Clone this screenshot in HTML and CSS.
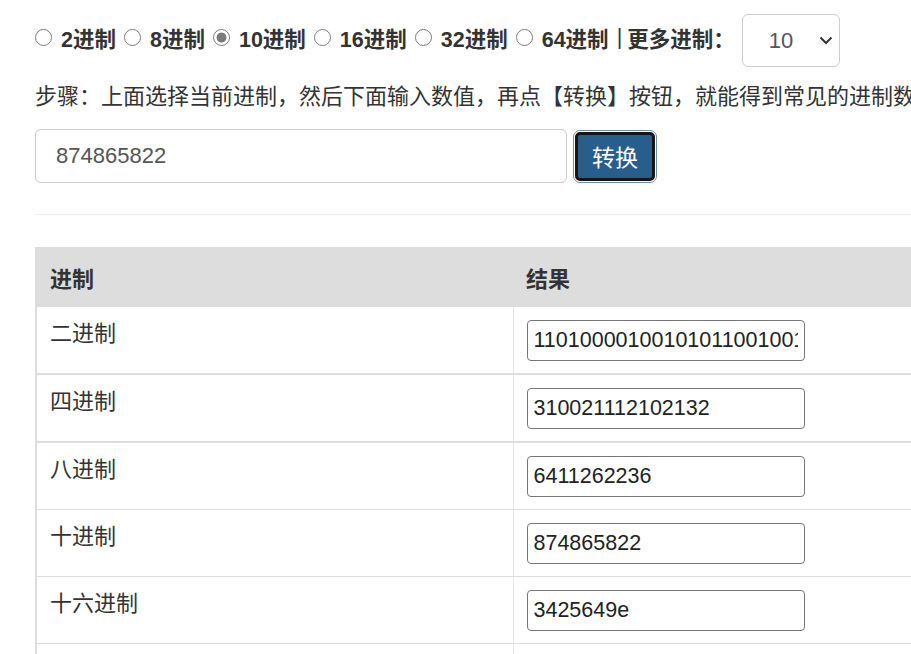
FILE: index.html
```html
<!DOCTYPE html>
<html lang="zh-CN">

<head>
  <meta charset="UTF-8">
  <meta name="viewport" content="width=device-width, initial-scale=1.0">
  <title>进制转换</title>
  <link rel="stylesheet" href="styles.css">
</head>

<body>
  <div class="container">
    <div class="bases">
      <label class="base"><input type="radio" name="base" value="2"><span>2进制</span></label>
      <label class="base"><input type="radio" name="base" value="8"><span>8进制</span></label>
      <label class="base"><input type="radio" name="base" value="10" checked><span>10进制</span></label>
      <label class="base"><input type="radio" name="base" value="16"><span>16进制</span></label>
      <label class="base"><input type="radio" name="base" value="32"><span>32进制</span></label>
      <label class="base"><input type="radio" name="base" value="64"><span>64进制</span></label>
      <span class="sep">|</span>
      <span class="more">更多进制：</span>
      <div class="select-wrap">
        <select id="moreBase">
          <option>2</option>
          <option>8</option>
          <option selected>10</option>
          <option>16</option>
          <option>32</option>
          <option>36</option>
        </select>
        <svg class="chevron" width="14" height="9" viewBox="0 0 14 9">
          <path d="M1.5 1.5 L7 7 L12.5 1.5" fill="none" stroke="#333" stroke-width="2" />
        </svg>
      </div>
    </div>

    <p class="steps">步骤：上面选择当前进制，然后下面输入数值，再点【转换】按钮，就能得到常见的进制数值。</p>

    <div class="convert">
      <input type="text" class="number-input" id="number" value="874865822">
      <button type="button" class="convert-btn">转换</button>
    </div>

    <hr class="divider">

    <table class="result-table">
      <thead>
        <tr>
          <th class="col-name">进制</th>
          <th>结果</th>
        </tr>
      </thead>
      <tbody>
        <tr class="thick">
          <td>二进制</td>
          <td><input type="text" class="result" value="110100001001010110010010011110"></td>
        </tr>
        <tr class="thick">
          <td>四进制</td>
          <td><input type="text" class="result" value="310021112102132"></td>
        </tr>
        <tr>
          <td>八进制</td>
          <td><input type="text" class="result" value="6411262236"></td>
        </tr>
        <tr>
          <td>十进制</td>
          <td><input type="text" class="result" value="874865822"></td>
        </tr>
        <tr>
          <td>十六进制</td>
          <td><input type="text" class="result" value="3425649e"></td>
        </tr>
        <tr>
          <td>三十二进制</td>
          <td><input type="text" class="result" value="q2ap4u"></td>
        </tr>
      </tbody>
    </table>
  </div>
</body>

</html>
```

FILE: styles.css
```css
* {
  margin: 0;
  padding: 0;
  box-sizing: border-box;
}

body {
  font-family: 'Liberation Sans', 'Noto Sans CJK SC', sans-serif;
  font-size: 22px;
  color: #333333;
  background: #ffffff;
  overflow: hidden;
}

.container {
  width: 1140px;
  padding: 14px 0 0 35px;
}

/* base choice row */
.bases {
  display: flex;
  align-items: center;
  font-size: 21.5px;
  font-weight: bold;
  height: 53px;
}

.base,
.sep,
.more {
  margin-bottom: 7px;
}

.base {
  display: flex;
  align-items: center;
  margin-right: 8px;
  cursor: pointer;
}

.base input {
  appearance: none;
  width: 17px;
  height: 17px;
  margin-right: 9px;
  border: 1px solid #7a7a7a;
  border-radius: 50%;
  background: #ffffff;
}

.base input:checked {
  background: radial-gradient(circle, #7a7a7a 0 4.6px, #ffffff 5.3px);
}

.sep {
  font-weight: normal;
  margin-right: 5px;
}

.select-wrap {
  position: relative;
  margin-left: 7px;
}

.select-wrap select {
  appearance: none;
  width: 98px;
  height: 53px;
  padding-left: 26px;
  font-family: 'Liberation Sans', sans-serif;
  font-size: 22px;
  color: #555555;
  background: #ffffff;
  border: 1px solid #cccccc;
  border-radius: 6px;
}

.chevron {
  position: absolute;
  right: 7px;
  top: 22px;
  pointer-events: none;
}

.steps {
  margin-top: 15px;
  line-height: 30px;
  white-space: nowrap;
}

/* input + button */
.convert {
  display: flex;
  align-items: center;
  margin-top: 17px;
}

.number-input {
  width: 532px;
  height: 54px;
  padding: 0 20px;
  font-family: 'Liberation Sans', sans-serif;
  font-size: 22px;
  color: #555555;
  border: 1px solid #cccccc;
  border-radius: 6px;
  outline: none;
}

.convert-btn {
  width: 80px;
  height: 49px;
  margin-left: 8px;
  font-family: 'Liberation Sans', 'Noto Sans CJK SC', sans-serif;
  font-size: 23px;
  color: #ffffff;
  background: #285e8e;
  border: 3px solid #161616;
  border-radius: 5px;
  outline: 1px solid #6a8db2;
  outline-offset: 1px;
  cursor: pointer;
}

.divider {
  margin-top: 31px;
  border: none;
  border-top: 1px solid #eeeeee;
}

/* result table */
.result-table {
  width: 100%;
  margin-top: 32px;
  border-collapse: collapse;
  border-left: 2px solid #dddddd;
}

.result-table th {
  height: 60px;
  padding: 0 13px;
  text-align: left;
  font-weight: bold;
  background: #dddddd;
}

.result-table .col-name {
  width: 477px;
}

.result-table td {
  padding: 13px 13px 12px;
  vertical-align: top;
  line-height: 30px;
  border-bottom: 1px solid #dddddd;
}

.result-table td:first-child {
  padding-top: 12px;
  border-right: 1px solid #e6e6e6;
}

.result-table tr.thick td {
  border-bottom-width: 2px;
}

.result {
  display: block;
  width: 278px;
  height: 41px;
  padding: 0 6px;
  font-family: 'Liberation Sans', sans-serif;
  font-size: 21.5px;
  color: #222222;
  border: 1px solid #767676;
  border-radius: 4px;
}
```
